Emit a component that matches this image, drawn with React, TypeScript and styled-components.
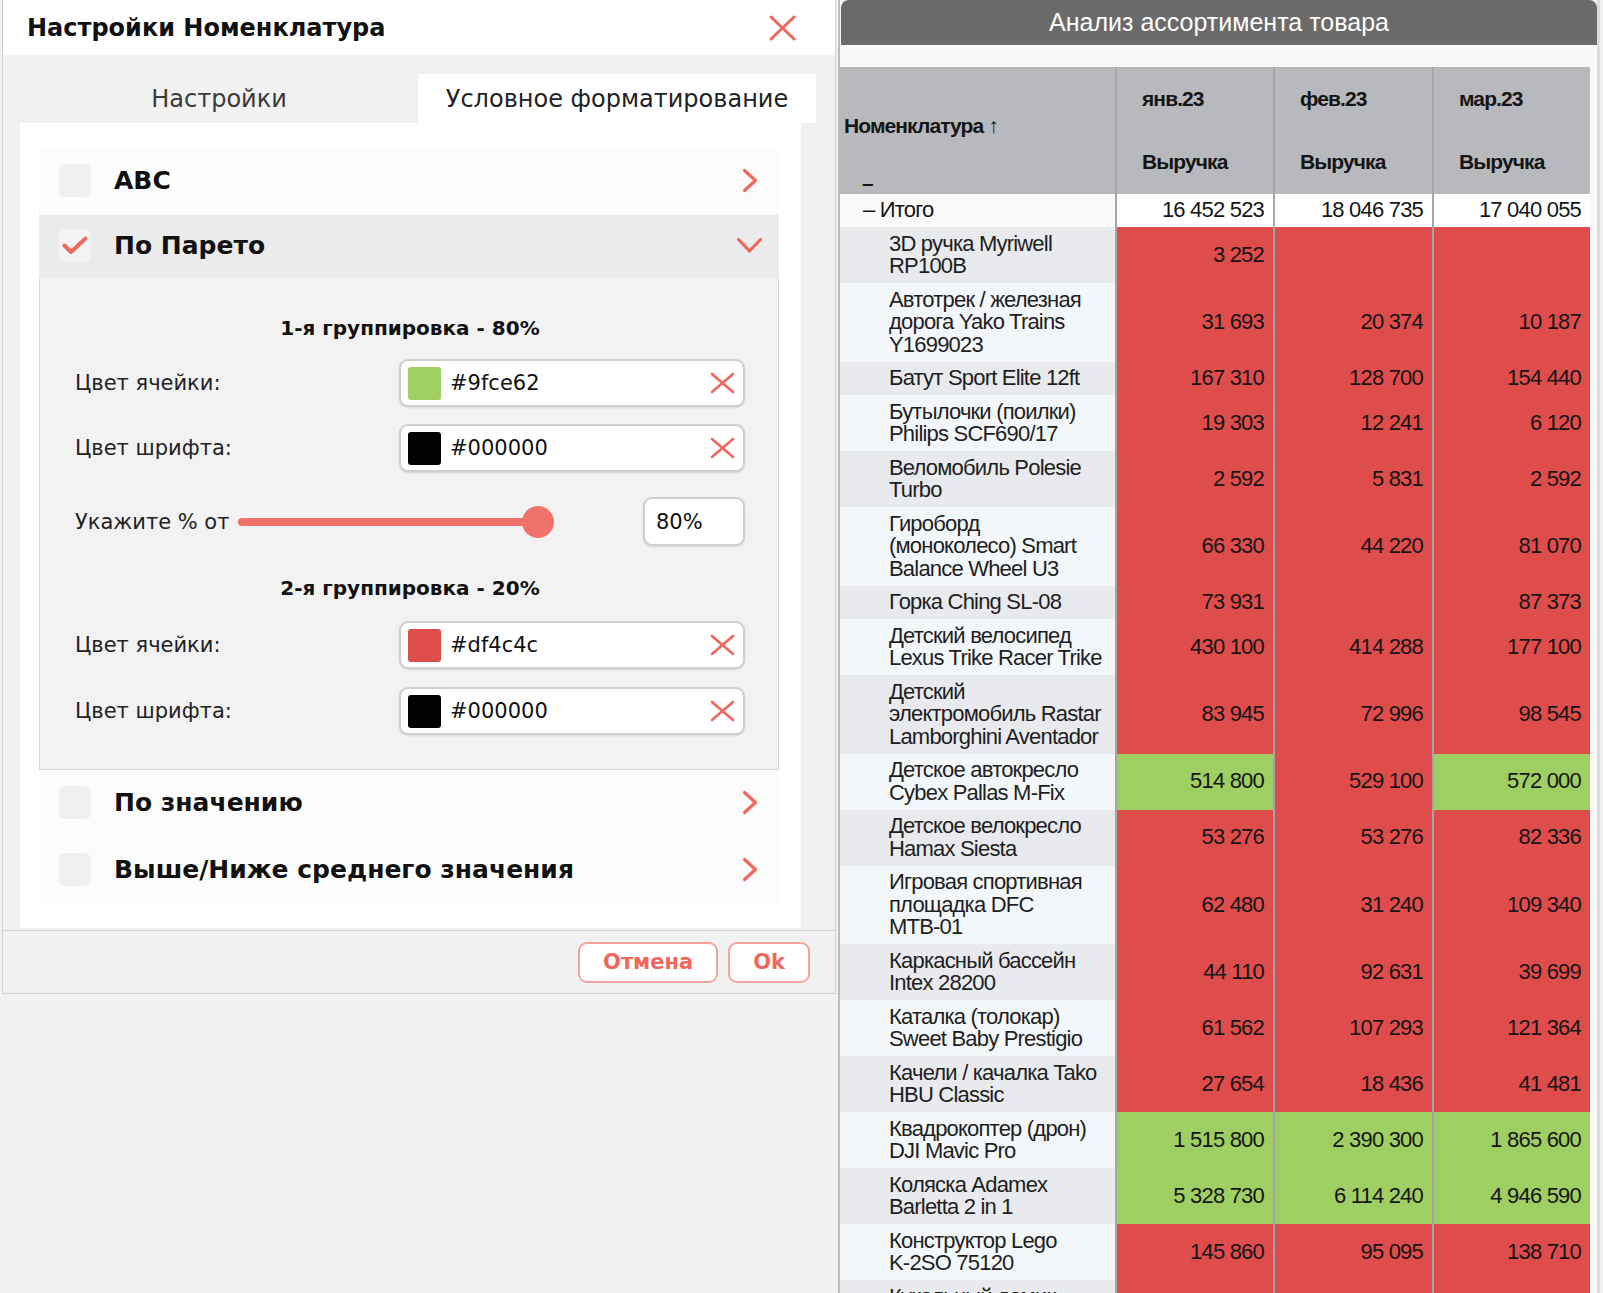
import React from "react";
import styled, { createGlobalStyle } from "styled-components";

const RED = "#f0675c";

type Row = { name: string[]; values: string[]; colors: ("r" | "g")[] };

const rows: Row[] = [
  { name: ["3D ручка Myriwell", "RP100B"], values: ["3 252", "", ""], colors: ["r", "r", "r"] },
  { name: ["Автотрек / железная", "дорога Yako Trains", "Y1699023"], values: ["31 693", "20 374", "10 187"], colors: ["r", "r", "r"] },
  { name: ["Батут Sport Elite 12ft"], values: ["167 310", "128 700", "154 440"], colors: ["r", "r", "r"] },
  { name: ["Бутылочки (поилки)", "Philips SCF690/17"], values: ["19 303", "12 241", "6 120"], colors: ["r", "r", "r"] },
  { name: ["Веломобиль Polesie", "Turbo"], values: ["2 592", "5 831", "2 592"], colors: ["r", "r", "r"] },
  { name: ["Гироборд", "(моноколесо) Smart", "Balance Wheel U3"], values: ["66 330", "44 220", "81 070"], colors: ["r", "r", "r"] },
  { name: ["Горка Ching SL-08"], values: ["73 931", "", "87 373"], colors: ["r", "r", "r"] },
  { name: ["Детский велосипед", "Lexus Trike Racer Trike"], values: ["430 100", "414 288", "177 100"], colors: ["r", "r", "r"] },
  { name: ["Детский", "электромобиль Rastar", "Lamborghini Aventador"], values: ["83 945", "72 996", "98 545"], colors: ["r", "r", "r"] },
  { name: ["Детское автокресло", "Cybex Pallas M-Fix"], values: ["514 800", "529 100", "572 000"], colors: ["g", "r", "g"] },
  { name: ["Детское велокресло", "Hamax Siesta"], values: ["53 276", "53 276", "82 336"], colors: ["r", "r", "r"] },
  { name: ["Игровая спортивная", "площадка DFC", "MTB-01"], values: ["62 480", "31 240", "109 340"], colors: ["r", "r", "r"] },
  { name: ["Каркасный бассейн", "Intex 28200"], values: ["44 110", "92 631", "39 699"], colors: ["r", "r", "r"] },
  { name: ["Каталка (толокар)", "Sweet Baby Prestigio"], values: ["61 562", "107 293", "121 364"], colors: ["r", "r", "r"] },
  { name: ["Качели / качалка Tako", "HBU Classic"], values: ["27 654", "18 436", "41 481"], colors: ["r", "r", "r"] },
  { name: ["Квадрокоптер (дрон)", "DJI Mavic Pro"], values: ["1 515 800", "2 390 300", "1 865 600"], colors: ["g", "g", "g"] },
  { name: ["Коляска Adamex", "Barletta 2 in 1"], values: ["5 328 730", "6 114 240", "4 946 590"], colors: ["g", "g", "g"] },
  { name: ["Конструктор Lego", "K-2SO 75120"], values: ["145 860", "95 095", "138 710"], colors: ["r", "r", "r"] },
  { name: ["Кукольный домик", "KidKraft Uptown"], values: ["41 200", "36 050", "52 890"], colors: ["r", "r", "r"] },
];

const CloseIcon = () => (
  <svg width="27" height="26" viewBox="0 0 27 26">
    <path d="M2 2 L25 24 M25 2 L2 24" stroke={RED} strokeWidth="3" strokeLinecap="round" fill="none" />
  </svg>
);

const ClearIcon = () => (
  <svg width="25" height="22" viewBox="0 0 25 22">
    <path d="M2 2 L23 20 M23 2 L2 20" stroke={RED} strokeWidth="2.6" strokeLinecap="round" fill="none" />
  </svg>
);

const ChevronRight = () => (
  <svg width="16" height="25" viewBox="0 0 16 25">
    <polyline points="2.5,2.5 13.5,12.5 2.5,22.5" stroke={RED} strokeWidth="3.2" strokeLinecap="round" strokeLinejoin="round" fill="none" />
  </svg>
);

const ChevronDown = () => (
  <svg width="27" height="17" viewBox="0 0 27 17">
    <polyline points="2.5,2.5 13.5,14 24.5,2.5" stroke={RED} strokeWidth="3.2" strokeLinecap="round" strokeLinejoin="round" fill="none" />
  </svg>
);

const CheckIcon = () => (
  <svg width="26" height="19" viewBox="0 0 26 19">
    <polyline points="2.5,9.5 9,16 23.5,2.5" stroke={RED} strokeWidth="4" strokeLinecap="round" strokeLinejoin="round" fill="none" />
  </svg>
);

const App: React.FC = () => {
  return (
    <>
      <GlobalStyle />
      <Page>
        <Dialog>
          <TitleBar>
            <Title>Настройки Номенклатура</Title>
            <CloseIcon />
          </TitleBar>
          <Body>
            <Tabs>
              <Tab>Настройки</Tab>
              <Tab $active>Условное форматирование</Tab>
            </Tabs>
            <Content>
              <OptionRow>
                <Checkbox />
                <OptionLabel>ABC</OptionLabel>
                <Chevron><ChevronRight /></Chevron>
              </OptionRow>
              <OptionRow $open>
                <Checkbox $open><CheckIcon /></Checkbox>
                <OptionLabel>По Парето</OptionLabel>
                <Chevron><ChevronDown /></Chevron>
              </OptionRow>
              <ParetoPanel>
                <GroupTitle>1-я группировка - 80%</GroupTitle>
                <FormRow $gap={17}>
                  <FieldLabel>Цвет ячейки:</FieldLabel>
                  <ColorInput>
                    <Swatch $color="#9fce62" />
                    <HexText>#9fce62</HexText>
                    <ClearIcon />
                  </ColorInput>
                </FormRow>
                <FormRow $gap={17}>
                  <FieldLabel>Цвет шрифта:</FieldLabel>
                  <ColorInput>
                    <Swatch $color="#000000" />
                    <HexText>#000000</HexText>
                    <ClearIcon />
                  </ColorInput>
                </FormRow>
                <FormRow $gap={25}>
                  <SliderGroup>
                    <FieldLabel>Укажите % от</FieldLabel>
                    <Slider>
                      <Track />
                      <Thumb />
                    </Slider>
                  </SliderGroup>
                  <PercentBox>80%</PercentBox>
                </FormRow>
                <GroupTitle $top={28}>2-я группировка - 20%</GroupTitle>
                <FormRow $gap={19}>
                  <FieldLabel>Цвет ячейки:</FieldLabel>
                  <ColorInput>
                    <Swatch $color="#df4c4c" />
                    <HexText>#df4c4c</HexText>
                    <ClearIcon />
                  </ColorInput>
                </FormRow>
                <FormRow $gap={18}>
                  <FieldLabel>Цвет шрифта:</FieldLabel>
                  <ColorInput>
                    <Swatch $color="#000000" />
                    <HexText>#000000</HexText>
                    <ClearIcon />
                  </ColorInput>
                </FormRow>
              </ParetoPanel>
              <OptionRow>
                <Checkbox />
                <OptionLabel>По значению</OptionLabel>
                <Chevron><ChevronRight /></Chevron>
              </OptionRow>
              <OptionRow>
                <Checkbox />
                <OptionLabel>Выше/Ниже среднего значения</OptionLabel>
                <Chevron><ChevronRight /></Chevron>
              </OptionRow>
            </Content>
          </Body>
          <Footer>
            <FooterButton>Отмена</FooterButton>
            <FooterButton>Ok</FooterButton>
          </Footer>
        </Dialog>

        <Report>
          <ReportHeader>Анализ ассортимента товара</ReportHeader>
          <Pivot>
            <colgroup>
              <col style={{ width: 276 }} />
              <col style={{ width: 158 }} />
              <col style={{ width: 159 }} />
              <col style={{ width: 157 }} />
            </colgroup>
            <thead>
              <tr>
                <NameHead rowSpan={2}>
                  <NameHeadInner>
                    <span>Номенклатура ↑</span>
                    <Collapse>–</Collapse>
                  </NameHeadInner>
                </NameHead>
                <MonthHead>янв.23</MonthHead>
                <MonthHead>фев.23</MonthHead>
                <MonthHead>мар.23</MonthHead>
              </tr>
              <tr>
                <MeasureHead>Выручка</MeasureHead>
                <MeasureHead>Выручка</MeasureHead>
                <MeasureHead>Выручка</MeasureHead>
              </tr>
            </thead>
            <tbody>
              <tr>
                <TotalName>– Итого</TotalName>
                <TotalValue>16 452 523</TotalValue>
                <TotalValue>18 046 735</TotalValue>
                <TotalValue>17 040 055</TotalValue>
              </tr>
              {rows.map((r, i) => (
                <tr key={i}>
                  <NameCell $dark={i % 2 === 0}>
                    {r.name.map((l, j) => (
                      <NameLine key={j}>{l}</NameLine>
                    ))}
                  </NameCell>
                  {r.values.map((v, j) => (
                    <ValueCell key={j} $color={r.colors[j] === "g" ? "#9fce62" : "#df4c4c"}>
                      {v}
                    </ValueCell>
                  ))}
                </tr>
              ))}
            </tbody>
          </Pivot>
        </Report>
      </Page>
    </>
  );
};

const GlobalStyle = createGlobalStyle`
  html, body {
    margin: 0;
    padding: 0;
    background: #f1f1f1;
  }
  #root {
    height: 1293px;
    overflow: hidden;
  }
`;

const Page = styled.div`
  display: flex;
  align-items: flex-start;
  padding-left: 2px;
  height: 1293px;
`;

// dialog on the left
const Dialog = styled.div`
  width: 834px;
  flex: none;
  box-sizing: border-box;
  border: 1px solid #d3d1c9;
  border-top: none;
  background: #f1f1f1;
  font-family: "DejaVu Sans", Verdana, sans-serif;
  color: #1a1a1a;
`;

const TitleBar = styled.div`
  height: 55px;
  background: #fff;
  display: flex;
  align-items: center;
  justify-content: space-between;
  padding: 0 39px 0 24px;
`;

const Title = styled.div`
  font-size: 24px;
  font-weight: 700;
  color: #111;
`;

const Body = styled.div`
  padding: 19px 19px 2px 17px;
`;

const Tabs = styled.div`
  display: flex;
  width: 796px;
`;

const Tab = styled.div<{ $active?: boolean }>`
  flex: 1;
  height: 49px;
  display: flex;
  align-items: center;
  justify-content: center;
  font-size: 24px;
  color: ${(p) => (p.$active ? "#222" : "#3a3a3a")};
  background: ${(p) => (p.$active ? "#fff" : "transparent")};
`;

const Content = styled.div`
  width: 781px;
  height: 805px;
  box-sizing: border-box;
  background: #fff;
  padding: 25px 22px 0 19px;
`;

const OptionRow = styled.div<{ $open?: boolean }>`
  height: ${(p) => (p.$open ? 63 : 67)}px;
  display: flex;
  align-items: center;
  padding: 0 16px 2px 20px;
  box-sizing: border-box;
  background: ${(p) => (p.$open ? "#ebebeb" : "#fcfcfc")};
`;

const Checkbox = styled.div<{ $open?: boolean }>`
  width: 32px;
  height: 33px;
  border-radius: 6px;
  background: ${(p) => (p.$open ? "#f3f3f3" : "#f0f0f0")};
  display: flex;
  align-items: center;
  justify-content: center;
`;

const OptionLabel = styled.div`
  flex: 1;
  margin-left: 23px;
  font-size: 25px;
  font-weight: 700;
  color: #111;
`;

const Chevron = styled.div`
  width: 27px;
  display: flex;
  justify-content: center;
`;

const ParetoPanel = styled.div`
  display: flex;
  flex-direction: column;
  background: #f2f2f2;
  border: 1px solid #dad7cd;
  border-top: none;
  padding: 36px 33px 34px 35px;
`;

const GroupTitle = styled.div<{ $top?: number }>`
  text-align: center;
  font-size: 20px;
  font-weight: 700;
  line-height: 28px;
  color: #111;
  margin-top: ${(p) => p.$top ?? 0}px;
`;

const FormRow = styled.div<{ $gap: number }>`
  display: flex;
  align-items: center;
  justify-content: space-between;
  margin-top: ${(p) => p.$gap}px;
`;

const FieldLabel = styled.div`
  font-size: 21px;
  color: #222;
`;

const ColorInput = styled.div`
  width: 346px;
  height: 48px;
  box-sizing: border-box;
  display: flex;
  align-items: center;
  padding: 0 8px 0 7px;
  background: #fff;
  border: 2px solid #cfcfcf;
  border-radius: 9px;
  box-shadow: 0 1px 2px rgba(0, 0, 0, 0.12);
`;

const Swatch = styled.div<{ $color: string }>`
  width: 33px;
  height: 33px;
  border-radius: 3px;
  background: ${(p) => p.$color};
`;

const HexText = styled.div`
  flex: 1;
  margin-left: 9px;
  font-size: 21px;
  color: #111;
`;

const SliderGroup = styled.div`
  display: flex;
  align-items: center;
`;

const Slider = styled.div`
  width: 316px;
  margin-left: 9px;
  display: flex;
  align-items: center;
`;

const Track = styled.div`
  flex: 1;
  height: 8px;
  border-radius: 4px;
  background: #f0726a;
`;

const Thumb = styled.div`
  width: 32px;
  height: 32px;
  margin-left: -16px;
  border-radius: 50%;
  background: #f0726a;
`;

const PercentBox = styled.div`
  width: 102px;
  height: 49px;
  box-sizing: border-box;
  display: flex;
  align-items: center;
  padding-left: 11px;
  background: #fff;
  border: 2px solid #cfcfcf;
  border-radius: 9px;
  box-shadow: 0 1px 2px rgba(0, 0, 0, 0.12);
  font-size: 21px;
  color: #111;
`;

const Footer = styled.div`
  height: 62px;
  border-top: 1px solid #d3d1c9;
  display: flex;
  align-items: center;
  justify-content: flex-end;
  gap: 10px;
  padding-right: 25px;
`;

const FooterButton = styled.button`
  height: 41px;
  padding: 0 23px;
  background: #fff;
  border: 2px solid #f4a49d;
  border-radius: 9px;
  color: ${RED};
  font-family: "DejaVu Sans", Verdana, sans-serif;
  font-size: 21px;
  font-weight: 700;
`;

// report on the right
const Report = styled.div`
  width: 762px;
  flex: none;
  box-sizing: border-box;
  margin-left: 2px;
  border-left: 2px solid #bdbdbd;
  border-right: 3px solid #dcdcdc;
  background: #f8f8f8;
  align-self: stretch;
  font-family: "Liberation Sans", Arial, sans-serif;
  color: #151515;
`;

const ReportHeader = styled.div`
  height: 45px;
  margin-left: 1px;
  background: #6a6a6a;
  border-radius: 8px 8px 0 0;
  display: flex;
  align-items: center;
  justify-content: center;
  color: #fff;
  font-size: 25px;
`;

const Pivot = styled.table`
  margin-top: 22px;
  width: 750px;
  table-layout: fixed;
  border-collapse: collapse;
  font-size: 22px;
  letter-spacing: -0.8px;
  line-height: 22.5px;
`;

const HeadCell = styled.th`
  background: #b8b9bc;
  text-align: left;
  font-size: 21px;
  font-weight: 700;
  letter-spacing: -0.9px;
`;

const NameHead = styled(HeadCell)`
  vertical-align: top;
  padding: 0 0 0 4px;
`;

const NameHeadInner = styled.div`
  height: 127px;
  display: flex;
  flex-direction: column;
  padding-top: 47px;
  box-sizing: border-box;
  line-height: 24px;
`;

const Collapse = styled.span`
  margin-top: 33px;
  padding-left: 18px;
  line-height: 24px;
`;

const MonthHead = styled(HeadCell)`
  height: 64px;
  box-sizing: border-box;
  border-left: 2px solid #a5a6a9;
  padding: 0 0 0 25px;
`;

const MeasureHead = styled(MonthHead)`
  height: 63px;
`;

const TotalName = styled.td`
  height: 33px;
  background: #fafafa;
  padding: 0 0 0 23px;
  white-space: nowrap;
`;

const TotalValue = styled.td`
  background: #fff;
  border-left: 2px solid #a5a6a9;
  text-align: right;
  padding: 0 9px 0 0;
`;

const NameCell = styled.td<{ $dark: boolean }>`
  background: ${(p) => (p.$dark ? "#e8eaed" : "#f4f7fa")};
  padding: 5.5px 4px 5.5px 49px;
  vertical-align: middle;
  color: #1e1e1e;
`;

const NameLine = styled.div`
  white-space: nowrap;
`;

const ValueCell = styled.td<{ $color: string }>`
  background: ${(p) => p.$color};
  border-left: 2px solid #a5a6a9;
  text-align: right;
  padding: 0 9px 0 0;
  vertical-align: middle;
`;

export default App;
